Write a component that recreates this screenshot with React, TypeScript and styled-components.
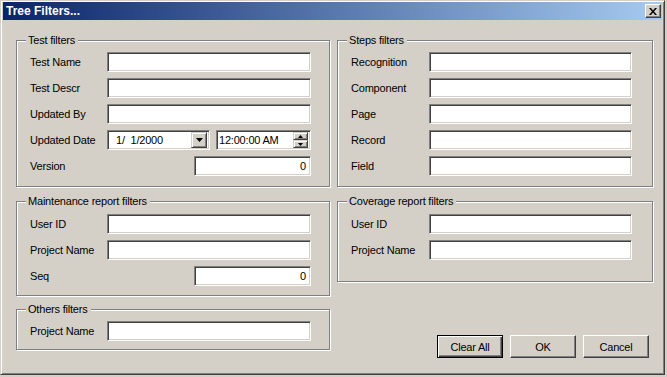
import React from 'react';
import styled, { createGlobalStyle, css } from 'styled-components';

const GlobalStyle = createGlobalStyle`
  html, body {
    margin: 0;
    padding: 0;
    background: #d4d0c8;
  }
  body {
    font-family: "Liberation Sans", Arial, sans-serif;
    font-size: 11px;
    letter-spacing: -0.2px;
    color: #000;
  }
`;

const Window = styled.div`
  box-sizing: border-box;
  width: 665px;
  height: 375px;
  background: #d4d0c8;
  border: 1px solid;
  border-color: #d4d0c8 #404040 #404040 #d4d0c8;
  box-shadow: inset 1px 1px 0 #fff, inset -1px -1px 0 #808080;
  padding: 1px 2px 2px 2px;
  display: flex;
  flex-direction: column;
`;

const TitleBar = styled.div`
  height: 18px;
  flex: none;
  display: flex;
  align-items: center;
  justify-content: space-between;
  padding: 0 1px 0 3px;
  background: linear-gradient(to right, #0a246a, #a6caf0);
  color: #fff;
  font-weight: bold;
  font-size: 12px;
  letter-spacing: 0;
`;

const CloseButton = styled.div`
  box-sizing: border-box;
  width: 16px;
  height: 14px;
  background: #d4d0c8;
  border: 1px solid;
  border-color: #fff #404040 #404040 #fff;
  box-shadow: inset -1px -1px 0 #808080;
  display: flex;
  align-items: center;
  justify-content: center;
`;

const Body = styled.div`
  display: flex;
  gap: 7px;
  padding: 20px 0 0 13px;
`;

const Column = styled.div<{ $w: number }>`
  width: ${(p) => p.$w}px;
  display: flex;
  flex-direction: column;
`;

const Group = styled.div<{ $pt: number; $pb: number; $mt?: number }>`
  position: relative;
  margin-top: ${(p) => p.$mt ?? 0}px;
  border: 1px solid #808080;
  box-shadow: inset 1px 1px 0 #fff, 1px 1px 0 #fff;
  padding: ${(p) => p.$pt}px 0 ${(p) => p.$pb}px 13px;
  display: flex;
  flex-direction: column;
  gap: 6px;
`;

const Caption = styled.span`
  position: absolute;
  top: -7px;
  left: 9px;
  line-height: 13px;
  padding: 0 3px 0 2px;
  background: #d4d0c8;
`;

const Row = styled.div`
  display: flex;
  align-items: center;
  height: 20px;
`;

const Label = styled.span<{ $w: number }>`
  width: ${(p) => p.$w}px;
  flex: none;
`;

const sunken = css`
  box-sizing: border-box;
  height: 20px;
  background: #fff;
  border: 1px solid;
  border-color: #808080 #fff #fff #808080;
  box-shadow: inset 1px 1px 0 #404040, inset -1px -1px 0 #d4d0c8;
`;

const TextBox = styled.input<{ $w: number; $right?: boolean }>`
  ${sunken};
  width: ${(p) => p.$w}px;
  margin: 0 0 0 ${(p) => (p.$right ? 'auto' : '0')};
  padding: 0 4px 0 3px;
  font: inherit;
  letter-spacing: inherit;
  color: #000;
  text-align: ${(p) => (p.$right ? 'right' : 'left')};
  outline: none;
`;

const Picker = styled.div<{ $w: number; $ml?: number }>`
  ${sunken};
  width: ${(p) => p.$w}px;
  margin-left: ${(p) => p.$ml ?? 0}px;
  display: flex;
  align-items: center;
  padding: 2px;
`;

const PickerText = styled.span<{ $pl: number }>`
  flex: 1;
  padding-left: ${(p) => p.$pl}px;
  white-space: pre;
`;

const raised = css`
  box-sizing: border-box;
  background: #d4d0c8;
  border: 1px solid;
  border-color: #d4d0c8 #404040 #404040 #d4d0c8;
  box-shadow: inset 1px 1px 0 #fff, inset -1px -1px 0 #808080;
  display: flex;
  align-items: center;
  justify-content: center;
`;

const DropButton = styled.div`
  ${raised};
  width: 16px;
  height: 16px;
`;

const Spinner = styled.div`
  display: flex;
  flex-direction: column;
  width: 15px;
  height: 16px;
`;

const SpinHalf = styled.div`
  ${raised};
  height: 8px;
`;

const ButtonRow = styled.div`
  display: flex;
  justify-content: flex-end;
  gap: 7px;
  margin-top: 53px;
  padding-right: 4px;
`;

const PushButton = styled.button<{ $default?: boolean }>`
  box-sizing: border-box;
  width: 66px;
  height: 23px;
  padding: 0;
  font: inherit;
  letter-spacing: inherit;
  color: #000;
  background: #d4d0c8;
  border: 1px solid;
  border-color: #fff #404040 #404040 #fff;
  box-shadow: inset -1px -1px 0 #808080;
  ${(p) =>
    p.$default &&
    css`
      border-color: #000;
      box-shadow: inset 1px 1px 0 #fff, inset -1px -1px 0 #404040, inset -2px -2px 0 #808080;
    `}
`;

const Arrow = ({ up, w, h }: { up?: boolean; w: number; h: number }) => (
  <svg width={w} height={h} viewBox={`0 0 ${w} ${h}`}>
    <path d={up ? `M0 ${h} L${w / 2} 0 L${w} ${h} Z` : `M0 0 L${w} 0 L${w / 2} ${h} Z`} fill="#000" />
  </svg>
);

const L = { label: 77, box: 204 };
const R = { label: 78, box: 203 };

const Field = ({ label, lw, bw }: { label: string; lw: number; bw: number }) => (
  <Row>
    <Label $w={lw}>{label}</Label>
    <TextBox $w={bw} readOnly defaultValue="" />
  </Row>
);

const NumberField = ({ label, lw }: { label: string; lw: number }) => (
  <Row style={{ width: lw + 204 }}>
    <Label $w={lw}>{label}</Label>
    <TextBox $w={117} $right readOnly defaultValue="0" />
  </Row>
);

export default function App() {
  return (
    <>
      <GlobalStyle />
      <Window>
        <TitleBar>
          <span>Tree Filters...</span>
          <CloseButton>
            <svg width="8" height="7" viewBox="0 0 8 7">
              <path d="M0 0 H2 L4 2.4 L6 0 H8 L5 3.5 L8 7 H6 L4 4.6 L2 7 H0 L3 3.5 Z" fill="#000" />
            </svg>
          </CloseButton>
        </TitleBar>
        <Body>
          <Column $w={314}>
            <Group $pt={11} $pb={10}>
              <Caption>Test filters</Caption>
              <Field label="Test Name" lw={L.label} bw={L.box} />
              <Field label="Test Descr" lw={L.label} bw={L.box} />
              <Field label="Updated By" lw={L.label} bw={L.box} />
              <Row>
                <Label $w={L.label}>Updated Date</Label>
                <Picker $w={103}>
                  <PickerText $pl={6}>{'1/  1/2000'}</PickerText>
                  <DropButton>
                    <Arrow w={7} h={4} />
                  </DropButton>
                </Picker>
                <Picker $w={95} $ml={6}>
                  <PickerText $pl={0}>12:00:00 AM</PickerText>
                  <Spinner>
                    <SpinHalf>
                      <Arrow up w={5} h={3} />
                    </SpinHalf>
                    <SpinHalf>
                      <Arrow w={5} h={3} />
                    </SpinHalf>
                  </Spinner>
                </Picker>
              </Row>
              <NumberField label="Version" lw={L.label} />
            </Group>
            <Group $pt={12} $pb={9} $mt={14}>
              <Caption>Maintenance report filters</Caption>
              <Field label="User ID" lw={L.label} bw={L.box} />
              <Field label="Project Name" lw={L.label} bw={L.box} />
              <NumberField label="Seq" lw={L.label} />
            </Group>
            <Group $pt={11} $pb={8} $mt={13}>
              <Caption>Others filters</Caption>
              <Field label="Project Name" lw={L.label} bw={L.box} />
            </Group>
          </Column>
          <Column $w={316}>
            <Group $pt={11} $pb={10}>
              <Caption>Steps filters</Caption>
              <Field label="Recognition" lw={R.label} bw={R.box} />
              <Field label="Component" lw={R.label} bw={R.box} />
              <Field label="Page" lw={R.label} bw={R.box} />
              <Field label="Record" lw={R.label} bw={R.box} />
              <Field label="Field" lw={R.label} bw={R.box} />
            </Group>
            <Group $pt={12} $pb={21} $mt={14}>
              <Caption>Coverage report filters</Caption>
              <Field label="User ID" lw={R.label} bw={R.box} />
              <Field label="Project Name" lw={R.label} bw={R.box} />
            </Group>
            <ButtonRow>
              <PushButton $default>Clear All</PushButton>
              <PushButton>OK</PushButton>
              <PushButton>Cancel</PushButton>
            </ButtonRow>
          </Column>
        </Body>
      </Window>
    </>
  );
}
